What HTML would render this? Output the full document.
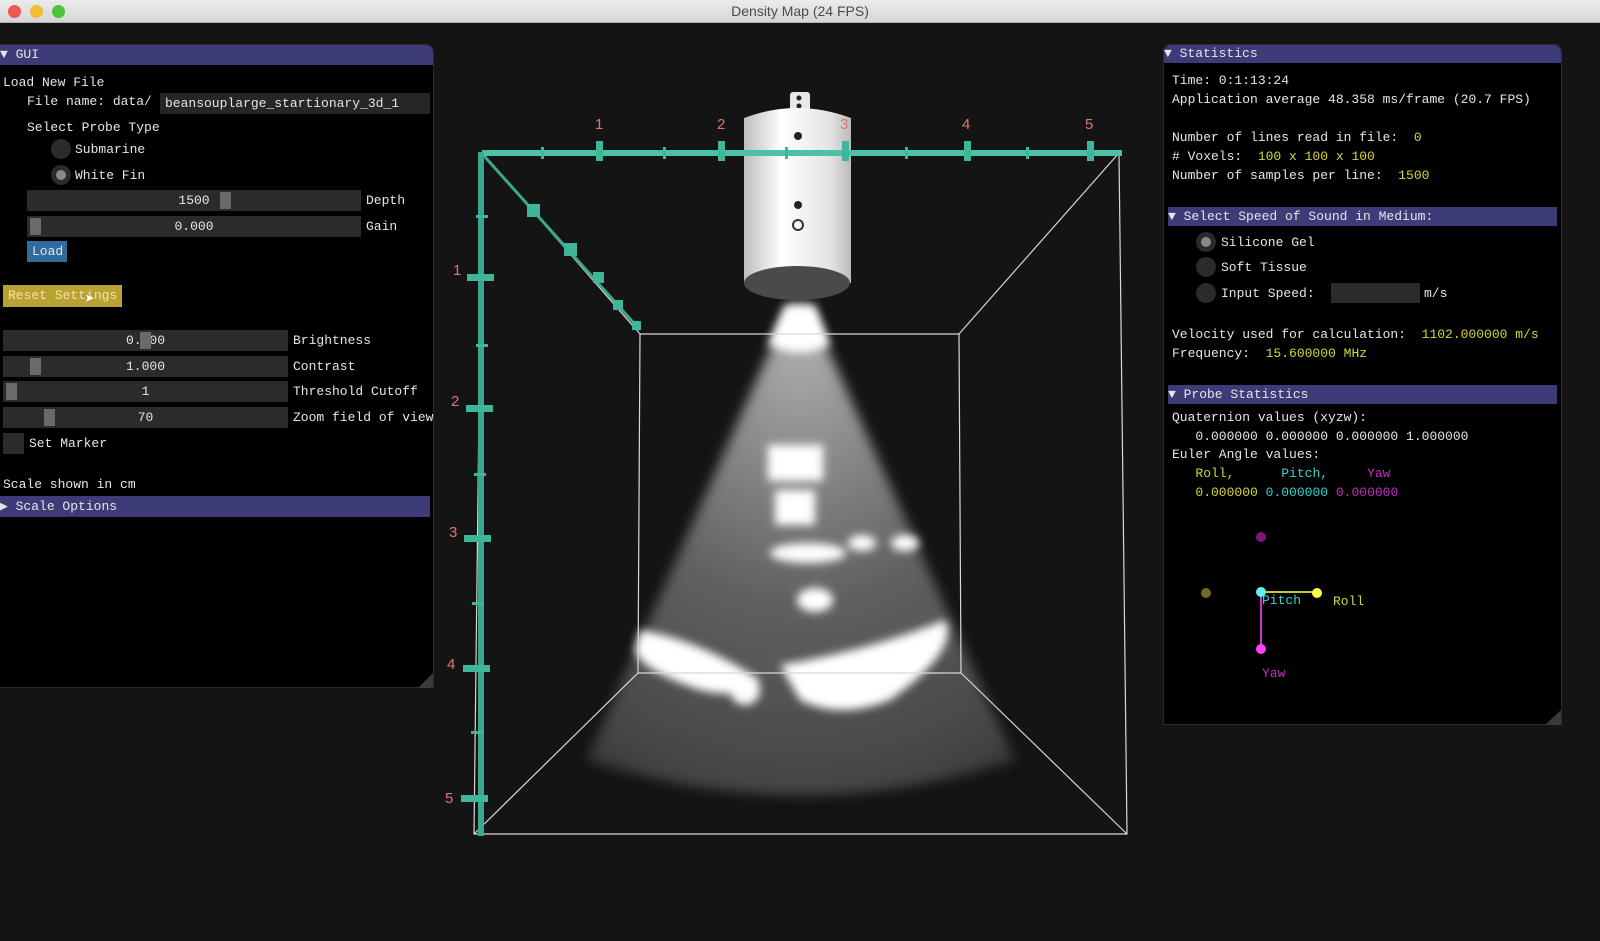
<!DOCTYPE html>
<html><head><style>
*{margin:0;padding:0;box-sizing:border-box}
body{width:1600px;height:941px;background:#141414;overflow:hidden;position:relative;font-family:"Liberation Mono",monospace;font-size:13px;color:#e6e6e6}
.tb{position:absolute;left:0;top:0;width:1600px;height:23px;background:linear-gradient(#ececec,#d6d6d6);border-bottom:1px solid #b0b0b0;text-align:center;font:14px/23px "Liberation Sans",sans-serif;color:#4a4a4a}
.dot{position:absolute;top:5px;width:13px;height:13px;border-radius:50%}
.p{position:absolute;background:#000;border:1px solid #2a2a2a}
.hd{position:absolute;background:#3d3b78;color:#e6e6e6;line-height:17px;height:17px}
.t{position:absolute;white-space:pre;line-height:15px}
.s{position:absolute;white-space:pre;line-height:15px;left:1172px}
.sl{position:absolute;background:#2b2b2b;height:21px;text-align:center;line-height:21px}
.gr{position:absolute;background:#6a6a6a;width:11px;height:17px;top:2px}
.rb{position:absolute;width:20px;height:20px;border-radius:50%;background:#2b2b2b}
.rb i{position:absolute;left:5px;top:5px;width:10px;height:10px;border-radius:50%;background:#8a8a8a}
.y{color:#d6d63a}
</style></head><body>
<div class="tb">Density Map (24 FPS)</div>
<div class="dot" style="left:8px;background:#ee5a52"></div>
<div class="dot" style="left:30px;background:#f4bb34"></div>
<div class="dot" style="left:52px;background:#4cc33d"></div>

<!-- GUI panel -->
<div class="p" style="left:-2px;top:44px;width:436px;height:644px;border-radius:0 8px 0 0"></div>
<div class="hd" style="left:0;top:45px;width:433px;border-radius:0 7px 0 0;height:20px;line-height:20px">▼ GUI</div>
<div class="t" style="left:3px;top:75px">Load New File</div>
<div class="t" style="left:27px;top:94px">File name: data/</div>
<div class="sl" style="left:160px;top:93px;width:270px;text-align:left;padding-left:5px;background:#262626">beansouplarge_startionary_3d_1</div>
<div class="t" style="left:27px;top:120px">Select Probe Type</div>
<div class="rb" style="left:51px;top:139px"></div><div class="t" style="left:75px;top:142px">Submarine</div>
<div class="rb" style="left:51px;top:165px"><i></i></div><div class="t" style="left:75px;top:168px">White Fin</div>
<div class="sl" style="left:27px;top:190px;width:334px">1500<div class="gr" style="left:193px"></div></div><div class="t" style="left:366px;top:193px">Depth</div>
<div class="sl" style="left:27px;top:216px;width:334px">0.000<div class="gr" style="left:3px"></div></div><div class="t" style="left:366px;top:219px">Gain</div>
<div class="t" style="left:27px;top:241px;width:40px;height:21px;background:#2f6b9c;line-height:21px;padding-left:5px">Load</div>
<div class="t" style="left:3px;top:285px;width:119px;height:22px;background:#b9a233;color:#efe6a8;line-height:22px;padding-left:5px">Reset Settings</div>
<div class="t" style="left:85px;top:293px;color:#fff;font-size:16px">➤</div>
<div class="sl" style="left:3px;top:330px;width:285px">0.000<div class="gr" style="left:137px"></div></div><div class="t" style="left:293px;top:333px">Brightness</div>
<div class="sl" style="left:3px;top:356px;width:285px">1.000<div class="gr" style="left:27px"></div></div><div class="t" style="left:293px;top:359px">Contrast</div>
<div class="sl" style="left:3px;top:381px;width:285px">1<div class="gr" style="left:3px"></div></div><div class="t" style="left:293px;top:384px">Threshold Cutoff</div>
<div class="sl" style="left:3px;top:407px;width:285px">70<div class="gr" style="left:41px"></div></div><div class="t" style="left:293px;top:410px">Zoom field of view</div>
<div style="position:absolute;left:3px;top:433px;width:21px;height:21px;background:#2b2b2b"></div><div class="t" style="left:29px;top:436px">Set Marker</div>
<div class="t" style="left:3px;top:477px">Scale shown in cm</div>
<div class="hd" style="left:0;top:496px;width:430px;height:21px;line-height:21px"> ▶  Scale Options</div>

<!-- Stats panel -->
<div class="p" style="left:1163px;top:44px;width:399px;height:681px;border-radius:7px 7px 0 0"></div>
<div class="hd" style="left:1164px;top:45px;width:397px;height:18px;line-height:18px;border-radius:7px 7px 0 0"> ▼ Statistics</div>
<div class="s" style="top:73px">Time: 0:1:13:24</div>
<div class="s" style="top:92px">Application average 48.358 ms/frame (20.7 FPS)</div>
<div class="s" style="top:130px">Number of lines read in file:  <span class="y">0</span></div>
<div class="s" style="top:149px"># Voxels:  <span class="y">100 x 100 x 100</span></div>
<div class="s" style="top:168px">Number of samples per line:  <span class="y">1500</span></div>
<div class="hd" style="left:1168px;top:207px;width:389px;height:19px;line-height:19px"> ▼  Select Speed of Sound in Medium:</div>
<div class="rb" style="left:1196px;top:232px"><i></i></div><div class="t" style="left:1221px;top:235px">Silicone Gel</div>
<div class="rb" style="left:1196px;top:257px"></div><div class="t" style="left:1221px;top:260px">Soft Tissue</div>
<div class="rb" style="left:1196px;top:283px"></div><div class="t" style="left:1221px;top:286px">Input Speed:</div>
<div style="position:absolute;left:1331px;top:283px;width:89px;height:20px;background:#2b2b2b"></div><div class="t" style="left:1424px;top:286px">m/s</div>
<div class="s" style="top:327px">Velocity used for calculation:  <span class="y">1102.000000 m/s</span></div>
<div class="s" style="top:346px">Frequency:  <span class="y">15.600000 MHz</span></div>
<div class="hd" style="left:1168px;top:385px;width:389px;height:19px;line-height:19px"> ▼  Probe Statistics</div>
<div class="s" style="top:410px">Quaternion values (xyzw):</div>
<div class="s" style="top:429px">   0.000000 0.000000 0.000000 1.000000</div>
<div class="s" style="top:447px">Euler Angle values:</div>
<div class="s" style="top:466px">   <span class="y">Roll,</span>      <span style="color:#3bd0d0">Pitch,</span>     <span style="color:#c030c0">Yaw</span></div>
<div class="s" style="top:485px">   <span class="y">0.000000</span> <span style="color:#3bd0d0">0.000000</span> <span style="color:#c030c0">0.000000</span></div>
<svg style="position:absolute;left:0;top:0" width="1600" height="941">
<line x1="1261" y1="592" x2="1317" y2="592" stroke="#c8c832" stroke-width="2"/>
<line x1="1261" y1="592" x2="1261" y2="649" stroke="#d030d0" stroke-width="2"/>
<circle cx="1261" cy="537" r="5" fill="#7a1a78"/>
<circle cx="1206" cy="593" r="5" fill="#6e6a24"/>
<circle cx="1261" cy="592" r="5" fill="#5ef0f0"/>
<circle cx="1317" cy="593" r="5" fill="#ffff50"/>
<circle cx="1261" cy="649" r="5" fill="#ff40ff"/>
<text x="1262" y="604" fill="#3bd0d0" font-family="Liberation Mono" font-size="13">Pitch</text>
<text x="1333" y="605" fill="#d6d63a" font-family="Liberation Mono" font-size="13">Roll</text>
<text x="1262" y="677" fill="#c030c0" font-family="Liberation Mono" font-size="13">Yaw</text>
<path d="M1545 725 L1561 710 L1561 725Z" fill="#3a3a3a"/>
<path d="M418 688 L433 673 L433 688Z" fill="#3a3a3a"/>

<defs>
<radialGradient id="cone" cx="0.5" cy="0.1" r="1">
<stop offset="0" stop-color="#bbb"/><stop offset="0.5" stop-color="#6a6a6a"/><stop offset="0.9" stop-color="#4a4a4a"/><stop offset="1" stop-color="#333"/></radialGradient>
<linearGradient id="cyl" x1="0" x2="1"><stop offset="0" stop-color="#bdbdbd"/><stop offset="0.35" stop-color="#fff"/><stop offset="0.8" stop-color="#e4e4e4"/><stop offset="1" stop-color="#bbb"/></linearGradient>
<filter id="bl"><feGaussianBlur stdDeviation="6"/></filter>
<filter id="bl2"><feGaussianBlur stdDeviation="4.5"/></filter>
</defs>
<!-- cone -->
<path d="M790 305 L808 305 L1015 760 Q800 830 587 760Z" fill="url(#cone)" filter="url(#bl)" opacity="0.9"/>
<g fill="#fff" filter="url(#bl2)">
<path d="M785 305 L815 305 L830 345 Q800 360 768 345Z"/>
<rect x="768" y="445" width="55" height="36"/>
<rect x="775" y="490" width="40" height="35"/>
<ellipse cx="808" cy="553" rx="38" ry="10"/>
<ellipse cx="862" cy="543" rx="14" ry="8"/>
<ellipse cx="905" cy="543" rx="14" ry="8"/>
<ellipse cx="815" cy="600" rx="18" ry="12"/>
<path d="M640 630 Q700 640 760 680 Q740 700 700 690 Q640 670 635 650Z"/>
<path d="M780 665 Q870 650 945 620 Q960 650 890 700 Q840 720 800 700Z"/>
<ellipse cx="745" cy="690" rx="15" ry="15"/>
</g>
<!-- boxes -->
<g stroke="#d8d8d8" stroke-width="1.2" fill="none">
<path d="M482 153 L1119 153 L1127 834 L474 834Z"/>
<path d="M640 334 L959 334 L961 673 L638 673Z"/>
<path d="M482 153 L640 334 M1119 153 L959 334 M1127 834 L961 673 M474 834 L638 673"/>
</g>
<!-- probe -->
<rect x="790" y="92" width="20" height="20" rx="3" fill="#e8e8e8"/>
<circle cx="799" cy="98" r="2.5" fill="#222"/><circle cx="799" cy="106" r="2.5" fill="#222"/>
<path d="M744 118 Q797 98 851 118 L851 283 L744 283Z" fill="url(#cyl)"/>
<ellipse cx="797" cy="283" rx="53" ry="17" fill="#4a4a4a"/>
<circle cx="798" cy="136" r="4" fill="#222"/><circle cx="798" cy="205" r="4" fill="#222"/>
<circle cx="798" cy="225" r="5" fill="none" stroke="#333" stroke-width="2"/>
<!-- axes -->
<g stroke="#3aa88e" fill="#3fb59a">
<rect x="482" y="150" width="640" height="6" stroke="none" fill="#4cc1a6"/>
<rect x="478" y="152" width="6" height="684" stroke="none" fill="#3aa88e"/>
<line x1="485" y1="157" x2="640" y2="330" stroke="#3aa88e" stroke-width="3"/>
</g>
<g fill="#3fb59a">
<rect x="596" y="141" width="7" height="20"/><rect x="718" y="141" width="7" height="20"/><rect x="842" y="141" width="7" height="20"/><rect x="964" y="141" width="7" height="20"/><rect x="1087" y="141" width="7" height="20"/>
<rect x="541" y="147" width="3" height="12"/><rect x="663" y="147" width="3" height="12"/><rect x="785" y="147" width="3" height="12"/><rect x="905" y="147" width="3" height="12"/><rect x="1026" y="147" width="3" height="12"/>
<rect x="467" y="274" width="27" height="7"/><rect x="466" y="405" width="27" height="7"/><rect x="464" y="535" width="27" height="7"/><rect x="463" y="665" width="27" height="7"/><rect x="461" y="795" width="27" height="7"/>
<rect x="476" y="215" width="12" height="3"/><rect x="476" y="344" width="12" height="3"/><rect x="474" y="473" width="12" height="3"/><rect x="472" y="602" width="12" height="3"/><rect x="471" y="731" width="12" height="3"/>
<rect x="527" y="204" width="13" height="13"/><rect x="564" y="243" width="13" height="13"/><rect x="593" y="272" width="11" height="11"/><rect x="613" y="300" width="10" height="10"/><rect x="632" y="321" width="9" height="9"/>
</g>
<g fill="#e57373" font-family="Liberation Sans" font-size="15">
<text x="595" y="129">1</text><text x="717" y="129">2</text><text x="840" y="129">3</text><text x="962" y="129">4</text><text x="1085" y="129">5</text>
<text x="453" y="275">1</text><text x="451" y="406">2</text><text x="449" y="537">3</text><text x="447" y="669">4</text><text x="445" y="803">5</text>
</g>
</svg>
</body></html>
